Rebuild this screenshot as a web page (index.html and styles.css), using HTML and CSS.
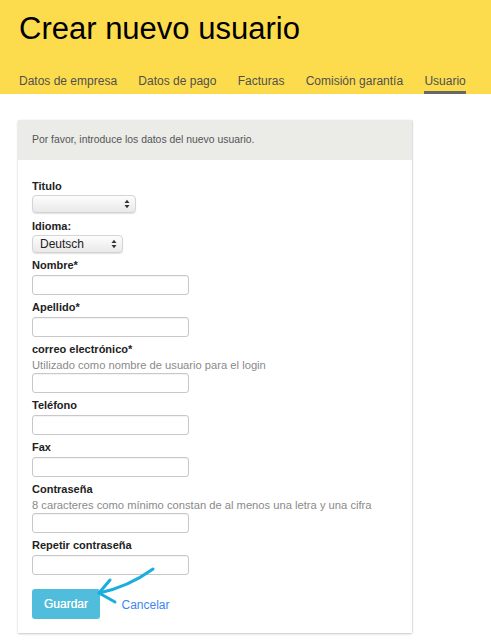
FILE: index.html
```html
<!DOCTYPE html>
<html lang="es">
<head>
<meta charset="utf-8">
<title>Crear nuevo usuario</title>
<link rel="stylesheet" href="styles.css">
</head>
<body>
<header class="top">
  <h1 class="title">Crear nuevo usuario</h1>
  <nav class="tabs">
    <a class="tab">Datos de empresa</a>
    <a class="tab">Datos de pago</a>
    <a class="tab">Facturas</a>
    <a class="tab">Comisión garantía</a>
    <a class="tab active">Usuario</a>
  </nav>
</header>

<main class="content">
  <section class="card">
    <div class="card-head">Por favor, introduce los datos del nuevo usuario.</div>
    <form class="card-body">
      <div class="field field-select">
        <label class="label">Titulo</label>
        <span class="select-wrap">
          <select class="select select-title"><option></option></select>
          <svg class="select-arrows" width="6" height="10" viewBox="0 0 6 10"><path d="M0.5 4 L3 0.8 L5.5 4 Z M0.5 6 L3 9.2 L5.5 6 Z" fill="#333"/></svg>
        </span>
      </div>
      <div class="field field-select">
        <label class="label">Idioma:</label>
        <span class="select-wrap">
          <select class="select select-lang"><option>Deutsch</option></select>
          <svg class="select-arrows" width="6" height="10" viewBox="0 0 6 10"><path d="M0.5 4 L3 0.8 L5.5 4 Z M0.5 6 L3 9.2 L5.5 6 Z" fill="#333"/></svg>
        </span>
      </div>
      <div class="field">
        <label class="label">Nombre*</label>
        <input class="input" type="text">
      </div>
      <div class="field">
        <label class="label">Apellido*</label>
        <input class="input" type="text">
      </div>
      <div class="field">
        <label class="label label-hinted">correo electrónico*</label>
        <div class="hint">Utilizado como nombre de usuario para el login</div>
        <input class="input" type="text">
      </div>
      <div class="field">
        <label class="label">Teléfono</label>
        <input class="input" type="text">
      </div>
      <div class="field">
        <label class="label">Fax</label>
        <input class="input" type="text">
      </div>
      <div class="field">
        <label class="label label-hinted">Contraseña</label>
        <div class="hint">8 caracteres como mínimo constan de al menos una letra y una cifra</div>
        <input class="input" type="password">
      </div>
      <div class="field">
        <label class="label">Repetir contraseña</label>
        <input class="input" type="password">
      </div>
      <div class="actions">
        <button class="btn" type="button">Guardar</button>
        <a class="cancel">Cancelar</a>
      </div>
    </form>
  </section>
</main>

<svg class="annotation" width="491" height="644" viewBox="0 0 491 644">
  <path d="M153 569 Q128 587 99 593" fill="none" stroke="#1aaee0" stroke-width="3" stroke-linecap="round"/>
  <path d="M110 580 L99 593 L115 602" fill="none" stroke="#1aaee0" stroke-width="3" stroke-linecap="round" stroke-linejoin="round"/>
</svg>
</body>
</html>
```

FILE: styles.css
```css
* { box-sizing: border-box; }

html, body {
  margin: 0;
  padding: 0;
  background: #ffffff;
}

body {
  position: relative;
  font-family: "Liberation Sans", Arial, Helvetica, sans-serif;
  color: #222;
  width: 491px;
  min-height: 644px;
  overflow: hidden;
}

.top {
  background: #fcdc4d;
  padding: 11px 19px 0;
  height: 94px;
}

.title {
  margin: 0;
  font-size: 31px;
  line-height: 36px;
  font-weight: normal;
  color: #000;
}

.tabs {
  display: flex;
  gap: 21.3px;
  margin-top: 27px;
}

.tab {
  font-size: 12px;
  line-height: 15px;
  color: #505050;
  padding-bottom: 2px;
  border-bottom: 3px solid transparent;
  white-space: nowrap;
}

.tab.active {
  border-bottom-color: #676767;
}

.content {
  padding: 26px 0 0 18px;
}

.card {
  width: 394px;
  background: #fff;
  box-shadow: 0 1px 2px rgba(0, 0, 0, 0.22), 1px 0 1px rgba(0, 0, 0, 0.05);
}

.card-head {
  background: #ebebe8;
  height: 40px;
  padding: 13px 14px;
  font-size: 10.4px;
  line-height: 14px;
  color: #555;
}

.card-body {
  padding: 19px 14px 14px;
  margin: 0;
}

.field {
  margin-top: 5px;
}

.field:first-child {
  margin-top: 0;
}

.field-select + .field-select {
  margin-top: 6px;
}

.label {
  display: block;
  font-size: 11px;
  line-height: 15px;
  font-weight: bold;
  color: #222;
  margin-bottom: 2px;
}

.field-select .label {
  margin-bottom: 1px;
}

.label-hinted {
  margin-bottom: 0;
}

.hint {
  font-size: 11.2px;
  line-height: 16px;
  color: #8a8a8a;
}

.input {
  display: block;
  width: 157px;
  height: 20px;
  margin: 0;
  border: 1px solid #c8c8c8;
  border-radius: 3px;
  background: #fff;
  box-shadow: inset 0 1px 1px rgba(0, 0, 0, 0.05);
  font: 12px "Liberation Sans", Arial, sans-serif;
}

.select-wrap {
  position: relative;
  display: inline-block;
  vertical-align: top;
}

.select {
  -webkit-appearance: none;
  appearance: none;
  display: block;
  height: 18px;
  margin: 0;
  padding: 0 0 0 7px;
  border: 1px solid #d4d4d4;
  border-radius: 4px;
  background: linear-gradient(#fdfdfd, #e9e9e9);
  box-shadow: 0 1px 1px rgba(0, 0, 0, 0.12);
  font: 12px/16px "Liberation Sans", Arial, sans-serif;
  color: #222;
}

.select-title { width: 104px; }
.select-lang { width: 91px; }

.select-arrows {
  position: absolute;
  right: 6px;
  top: 4px;
  pointer-events: none;
}

.actions {
  display: flex;
  align-items: center;
  gap: 21.5px;
  margin-top: 14px;
}

.btn {
  height: 30px;
  width: 68px;
  padding: 0;
  border: 0;
  border-radius: 3px;
  background: #50bddc;
  color: #fff;
  font: 12px "Liberation Sans", Arial, sans-serif;
  text-shadow: 0 0 0.4px #fff;
}

.cancel {
  font-size: 12px;
  color: #3d86f2;
  margin-top: 1px;
}

.annotation {
  position: absolute;
  left: 0;
  top: 0;
  pointer-events: none;
}
```
